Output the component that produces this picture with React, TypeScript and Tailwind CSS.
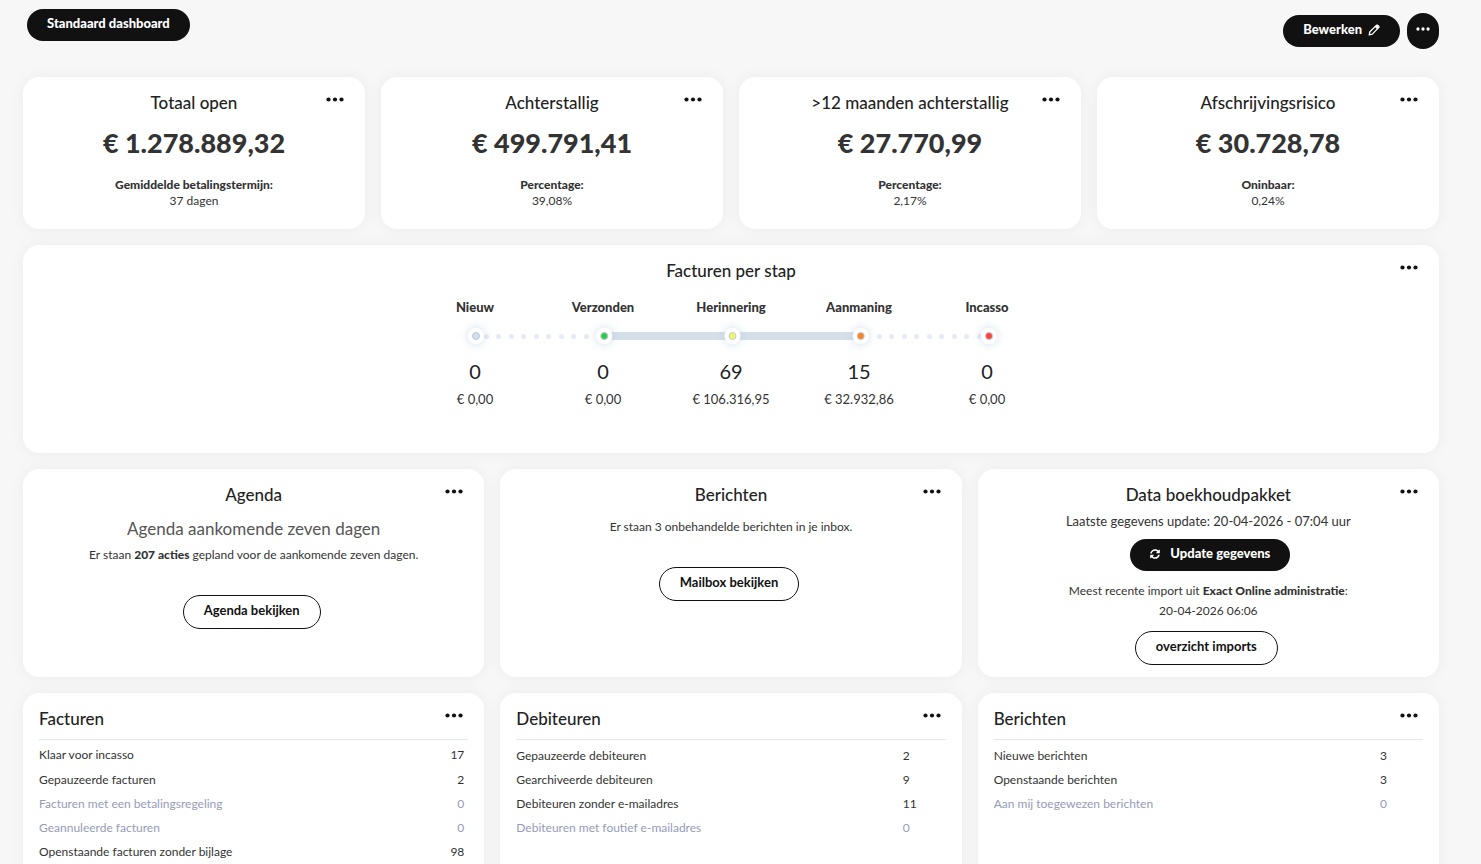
import React from 'react';
import clsx from 'clsx';
import { FaSyncAlt } from 'react-icons/fa';

interface Kpi {
  title: string;
  amount: string;
  label: string;
  value: string;
}

interface Step {
  name: string;
  count: number;
  amount: string;
  color: string;
}

interface Row {
  label: string;
  value: number;
}

const KPIS: Kpi[] = [
  { title: 'Totaal open', amount: '€ 1.278.889,32', label: 'Gemiddelde betalingstermijn:', value: '37 dagen' },
  { title: 'Achterstallig', amount: '€ 499.791,41', label: 'Percentage:', value: '39,08%' },
  { title: '>12 maanden achterstallig', amount: '€ 27.770,99', label: 'Percentage:', value: '2,17%' },
  { title: 'Afschrijvingsrisico', amount: '€ 30.728,78', label: 'Oninbaar:', value: '0,24%' },
];

const STEPS: Step[] = [
  { name: 'Nieuw', count: 0, amount: '€ 0,00', color: '#d3ddee' },
  { name: 'Verzonden', count: 0, amount: '€ 0,00', color: '#2ecc40' },
  { name: 'Herinnering', count: 69, amount: '€ 106.316,95', color: '#f3f56b' },
  { name: 'Aanmaning', count: 15, amount: '€ 32.932,86', color: '#ff851b' },
  { name: 'Incasso', count: 0, amount: '€ 0,00', color: '#ff4136' },
];

const INVOICES: Row[] = [
  { label: 'Klaar voor incasso', value: 17 },
  { label: 'Gepauzeerde facturen', value: 2 },
  { label: 'Facturen met een betalingsregeling', value: 0 },
  { label: 'Geannuleerde facturen', value: 0 },
  { label: 'Openstaande facturen zonder bijlage', value: 98 },
];

const DEBTORS: Row[] = [
  { label: 'Gepauzeerde debiteuren', value: 2 },
  { label: 'Gearchiveerde debiteuren', value: 9 },
  { label: 'Debiteuren zonder e-mailadres', value: 11 },
  { label: 'Debiteuren met foutief e-mailadres', value: 0 },
];

const MESSAGES: Row[] = [
  { label: 'Nieuwe berichten', value: 3 },
  { label: 'Openstaande berichten', value: 3 },
  { label: 'Aan mij toegewezen berichten', value: 0 },
];

const Dots: React.FC<{ className?: string }> = ({ className }) => (
  <svg viewBox="0 0 18 5" className={className} fill="currentColor" aria-hidden="true">
    <circle cx="2.5" cy="2.5" r="2.1" />
    <circle cx="9" cy="2.5" r="2.1" />
    <circle cx="15.5" cy="2.5" r="2.1" />
  </svg>
);

const Pencil: React.FC<{ className?: string }> = ({ className }) => (
  <svg viewBox="0 0 12 12" className={className} fill="none" stroke="currentColor" strokeWidth="1.3" strokeLinejoin="round" aria-hidden="true">
    <path d="M1.2 10.8l.7-3.1 6.2-6.1a1.35 1.35 0 0 1 1.9 0l.4.4a1.35 1.35 0 0 1 0 1.9l-6.1 6.2z" />
    <path d="M7 2.7l2.3 2.3 1.3-1.3a1.2 1.2 0 0 0 0-1.7l-.6-.6a1.2 1.2 0 0 0-1.7 0z" fill="currentColor" strokeWidth="0.6" />
  </svg>
);

const Card: React.FC<{ title: string; align?: 'center' | 'left'; className?: string; children: React.ReactNode }> = ({
  title,
  align = 'center',
  className,
  children,
}) => (
  <section
    className={clsx(
      'relative rounded-2xl bg-white px-4 pt-3.5 shadow-[0_0_16px_rgba(0,0,0,0.05)]',
      align === 'center' && 'text-center',
      className,
    )}
  >
    <h2 className="text-[17px] leading-6 font-medium text-[#222]">{title}</h2>
    <button type="button" aria-label={`Opties ${title}`} className="absolute top-3 right-4 flex h-5 w-7 items-center justify-center text-[#111]">
      <Dots className="h-[5px] w-[18px]" />
    </button>
    {children}
  </section>
);

const PillButton: React.FC<{ variant?: 'solid' | 'outline'; className?: string; children: React.ReactNode }> = ({
  variant = 'solid',
  className,
  children,
}) => (
  <button
    type="button"
    className={clsx(
      'inline-flex items-center justify-center rounded-full px-5 pb-0.5 text-[13px]',
      variant === 'solid' ? 'h-8 bg-[#111] font-black text-white' : 'mr-1 h-[34px] border border-[#111] bg-white font-bold text-[#111]',
      className,
    )}
  >
    {children}
  </button>
);

const StepTrack = () => (
  <svg viewBox="0 0 640 40" className="block h-10 w-[640px]" aria-hidden="true">
    <defs>
      <filter id="glow" x="-150%" y="-150%" width="400%" height="400%">
        <feDropShadow dx="0" dy="0" stdDeviation="5" floodColor="#8fb0cf" floodOpacity="0.45" />
      </filter>
    </defs>
    {[76, 88, 101, 113, 126, 138, 151, 163, 176].map(x => (
      <circle key={x} cx={x - 0.5} cy="19.5" r="2.5" fill="#e4eaf6" />
    ))}
    {[469, 481, 494, 506, 519, 531, 544, 556, 569].map(x => (
      <circle key={x} cx={x - 0.5} cy="19.5" r="2.5" fill="#e4eaf6" />
    ))}
    <rect x="194" y="15" width="256" height="8" fill="#d6e0eb" />
    {STEPS.map((step, i) => (
      <g key={step.name}>
        <circle cx={65 + i * 128.25} cy="19" r="8" fill="#fff" filter="url(#glow)" />
        <circle cx={65 + i * 128.25} cy="19" r="3.5" fill={step.color} stroke="#b9c7de" strokeWidth="1" />
      </g>
    ))}
  </svg>
);

const CountTable: React.FC<{ rows: Row[]; flushRight?: boolean }> = ({ rows, flushRight }) => (
  <div className={clsx('mt-2 border-t border-[#e2e6ee]', flushRight ? 'pt-0.5' : 'pt-1')}>
    <table className="w-full border-collapse text-xs text-[#333]">
      <tbody>
        {rows.map((row, i) => (
          <tr key={row.label} className={clsx(flushRight && i === 0 ? 'h-[26px]' : 'h-6', row.value === 0 && 'text-[#959bb8]')}>
            <th scope="row" className="p-0 text-left font-normal">
              {row.label}
            </th>
            <td className={clsx('p-0', flushRight ? 'pr-1 text-right' : 'w-1/10')}>{row.value}</td>
          </tr>
        ))}
      </tbody>
    </table>
  </div>
);

const App = () => {
  return (
    <main className="min-h-screen bg-[#f7f7f7] pt-2 pr-[42px] pb-4 pl-[23px] font-['Lato','Liberation_Sans',sans-serif] text-[#333]">
      <header className="flex h-[69px] items-start justify-between pl-1">
        <PillButton className="mt-px">Standaard dashboard</PillButton>
        <div className="mt-[5px] flex items-center gap-[7px]">
          <PillButton>
            Bewerken
            <Pencil className="ml-1.5 size-3" />
          </PillButton>
          <button type="button" aria-label="Meer opties" className="flex h-9 w-8 items-center justify-center rounded-full bg-[#111] pb-1 text-white">
            <Dots className="h-1 w-3.5" />
          </button>
        </div>
      </header>

      <div className="grid grid-cols-4 gap-4">
        {KPIS.map(kpi => (
          <Card key={kpi.title} title={kpi.title} className="min-h-[152px]">
            <p className="mt-3 text-[27px] leading-8 font-black">{kpi.amount}</p>
            <p className="mt-[18px] text-xs leading-4 font-black">{kpi.label}</p>
            <p className="text-xs leading-4">{kpi.value}</p>
          </Card>
        ))}
      </div>

      <Card title="Facturen per stap" className="mt-4 min-h-[208px]">
        <div className="mx-auto mt-3.5 w-[640px]">
          <ol className="grid grid-cols-5 text-[13px] leading-5 font-black">
            {STEPS.map(step => (
              <li key={step.name}>{step.name}</li>
            ))}
          </ol>
          <StepTrack />
          <ol className="-mt-0.5 grid grid-cols-5">
            {STEPS.map(step => (
              <li key={step.name}>
                <p className="text-xl leading-8 text-[#222]">{step.count}</p>
                <p className="text-[13px] leading-6">{step.amount}</p>
              </li>
            ))}
          </ol>
        </div>
      </Card>

      <div className="mt-4 grid grid-cols-3 gap-4">
        <Card title="Agenda" className="min-h-[208px]">
          <p className="mt-2.5 text-[17px] leading-6 text-[#555]">Agenda aankomende zeven dagen</p>
          <p className="mt-1 mb-[30px] text-xs leading-5">
            Er staan <strong className="font-black">207 acties</strong> gepland voor de aankomende zeven dagen.
          </p>
          <PillButton variant="outline">Agenda bekijken</PillButton>
        </Card>
        <Card title="Berichten" className="min-h-[208px]">
          <p className="mt-2.5 mb-[30px] text-xs leading-5">Er staan 3 onbehandelde berichten in je inbox.</p>
          <PillButton variant="outline">Mailbox bekijken</PillButton>
        </Card>
        <Card title="Data boekhoudpakket" className="min-h-[208px]">
          <p className="mt-1 mb-2 text-[13px] leading-5">Laatste gegevens update: 20-04-2026 - 07:04 uur</p>
          <PillButton className="ml-1">
            <FaSyncAlt className="mr-2.5 size-2.5" />
            Update gegevens
          </PillButton>
          <p className="mt-2.5 text-xs leading-5">
            Meest recente import uit <strong className="font-black">Exact Online administratie</strong>:
          </p>
          <p className="mb-2.5 text-xs leading-5">20-04-2026 06:06</p>
          <PillButton variant="outline">overzicht imports</PillButton>
        </Card>
      </div>

      <div className="mt-4 grid grid-cols-3 gap-4">
        <Card title="Facturen" align="left" className="min-h-[208px]">
          <CountTable rows={INVOICES} flushRight />
        </Card>
        <Card title="Debiteuren" align="left" className="min-h-[208px]">
          <CountTable rows={DEBTORS} />
        </Card>
        <Card title="Berichten" align="left" className="min-h-[208px]">
          <CountTable rows={MESSAGES} />
        </Card>
      </div>
    </main>
  );
};

export default App;
